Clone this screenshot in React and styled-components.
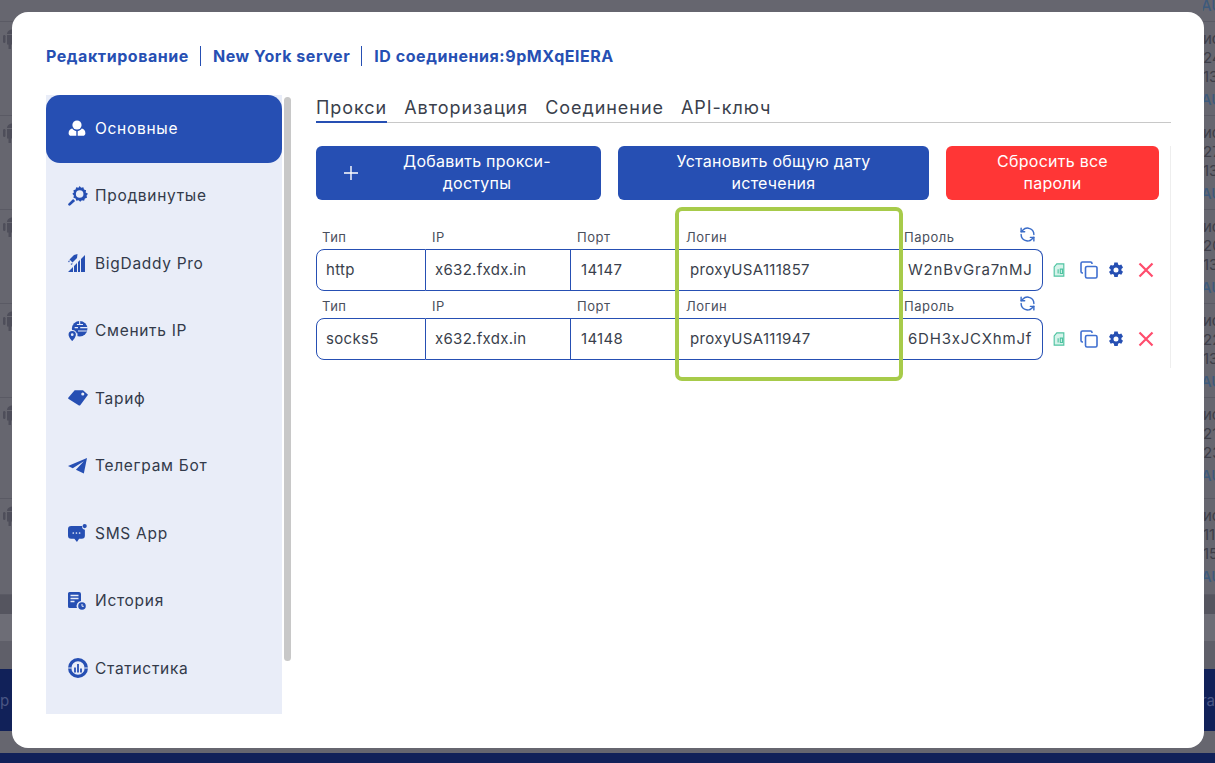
import React from "react";
import styled, { createGlobalStyle } from "styled-components";

const Global = createGlobalStyle`
  html, body {
    margin: 0;
    padding: 0;
    height: 100%;
    overflow: hidden;
    font-family: Inter, "Open Sans", "Liberation Sans", sans-serif;
  }
  * { box-sizing: border-box; }
`;

const BLUE = "#264fb3";

const Backdrop = styled("div")`
  height: 763px;
  width: 1215px;
  overflow: hidden;
  background: #66666f;
  display: flex;
  flex-direction: column;
`;

const BackRow = styled("div")`
  height: ${(p) => p.$h}px;
  flex: none;
  display: flex;
  justify-content: space-between;
  align-items: ${(p) => (p.$top ? "flex-end" : "stretch")};
  padding-left: 3px;
  padding-bottom: ${(p) => (p.$top ? 6 : 0)}px;
  border-bottom: 1px solid #5a5a64;
  overflow: hidden;
`;

const BackIcon = styled("svg")`
  width: 18px;
  height: 20px;
  margin-top: 7px;
  color: #4e4e5a;
  flex: none;
`;

const BackCell = styled("div")`
  width: 12px;
  flex: none;
  white-space: nowrap;
  font-size: 15px;
  line-height: 19px;
  color: #3e3e48;
  padding-top: ${(p) => (p.$top ? 0 : 7)}px;
  overflow: hidden;
`;

const BackLink = styled("div")`
  color: #3d5a7c;
  font-weight: 500;
  margin-top: ${(p) => (p.$top ? 0 : 4)}px;
  margin-left: -2px;
`;

const Band = styled("div")`
  height: ${(p) => p.$h}px;
  flex: none;
  background: ${(p) => p.$bg};
  display: flex;
  justify-content: space-between;
  align-items: center;
  color: #4a5684;
  font-size: 15px;
`;

const Modal = styled("div")`
  position: fixed;
  top: 12px;
  left: 12px;
  width: 1192px;
  height: 736px;
  background: #fff;
  border-radius: 16px;
  padding: 34px 33px 34px 34px;
  display: flex;
  flex-direction: column;
  overflow: hidden;
`;

const Heading = styled("div")`
  display: flex;
  align-items: center;
  height: 20px;
  font-size: 16px;
  font-weight: 700;
  letter-spacing: 0.55px;
  color: ${BLUE};
  white-space: nowrap;
`;

const HeadPart = styled("span")`
  padding: 0 11px 0 12px;
  line-height: 20px;
  border-left: 1px solid ${BLUE};

  &:first-child {
    padding-left: 0;
    border-left: none;
  }
`;

const Body = styled("div")`
  flex: 1;
  min-height: 0;
  display: flex;
  margin-top: 29px;
`;

const Sidebar = styled("nav")`
  width: 236px;
  height: 619px;
  flex: none;
  background: #e9edf8;
  overflow: hidden;
`;

const NavItem = styled("div")`
  height: 67.5px;
  display: flex;
  align-items: center;
  padding: 0 0 1px 22px;
  font-size: 15.5px;
  letter-spacing: 0.7px;
  border-radius: 14px;
  color: ${(p) => (p.$active ? "#fff" : "#333a4a")};
  background: ${(p) => (p.$active ? BLUE : "transparent")};
`;

const NavIcon = styled("svg")`
  width: ${(p) => p.$size}px;
  height: ${(p) => p.$size}px;
  margin-right: ${(p) => 27 - p.$size}px;
  flex: none;
  color: ${(p) => (p.$active ? "#fff" : BLUE)};
`;

const Scrollbar = styled("div")`
  width: 7px;
  height: 564px;
  margin: 2px 0 0 2px;
  flex: none;
  background: #c8c8c8;
  border-radius: 4px;
`;

const Content = styled("div")`
  width: 855px;
  margin-left: 25px;
  flex: none;
`;

const Tabs = styled("div")`
  display: flex;
  gap: 17px;
  height: 28px;
  border-bottom: 1px solid #c8c8c8;
`;

const Tab = styled("div")`
  font-size: 18px;
  letter-spacing: 0.95px;
  line-height: 25px;
  height: 28px;
  color: #3a3f4c;
  white-space: nowrap;
  border-bottom: ${(p) => (p.$active ? `2px solid ${BLUE}` : "none")};
`;

const Panel = styled("div")`
  height: 222px;
  margin-top: 23px;
  border-right: 1px solid #eeeeee;
`;

const Buttons = styled("div")`
  display: flex;
  gap: 17px;
`;

const Button = styled("div")`
  width: ${(p) => p.$w}px;
  height: 54px;
  flex: none;
  display: flex;
  align-items: center;
  justify-content: center;
  padding: 0 ${(p) => p.$pad}px 2px;
  border-radius: 6px;
  background: ${(p) => (p.$danger ? "#ff3636" : BLUE)};
  color: #fff;
  font-size: 16px;
  letter-spacing: 0.25px;
  line-height: 22px;
  text-align: center;
`;

const AddButton = styled(Button)`
  padding: 0 41px 2px 27px;
`;

const PlusIcon = styled("svg")`
  width: 16px;
  height: 16px;
  margin: 2px 35px 0 0;
  flex: none;
`;

const ButtonText = styled("span")`
  flex: 1;
`;

const Rows = styled("div")`
  position: relative;
  margin-top: 22px;
`;

const Row = styled("div")`
  display: grid;
  grid-template-columns: 110px 145px 109px 218px 145px 1fr;
  grid-template-rows: 27px 42px;
`;

const Label = styled("div")`
  font-size: 13px;
  letter-spacing: 0.5px;
  color: #4a4f5c;
  padding: 7px 0 0 6px;
  line-height: 16px;
  display: flex;
  justify-content: space-between;

  svg {
    width: 17px;
    height: 17px;
    margin: -3px 7px 0 0;
    color: #3a6cc8;
  }
`;

const Value = styled("div")`
  border: 1.5px solid ${BLUE};
  border-left: ${(p) => (p.$first ? `1.5px solid ${BLUE}` : "none")};
  border-right: ${(p) => (p.$last || p.$rightLine ? `1.5px solid ${BLUE}` : "none")};
  border-radius: ${(p) => (p.$first ? "8px 0 0 8px" : p.$last ? "0 8px 8px 0" : "0")};
  padding: 0 0 2px ${(p) => (p.$rightLine ? 9 : 10)}px;
  display: flex;
  align-items: center;
  font-size: 15px;
  letter-spacing: ${(p) => (p.$last ? 0.8 : 0.3)}px;
  color: #3a3f4c;
  white-space: nowrap;
  overflow: hidden;
`;

const Actions = styled("div")`
  grid-column: 6;
  grid-row: 2;
  display: flex;
  align-items: center;
  padding-left: 9px;
`;

const ActionIcon = styled("svg")`
  width: ${(p) => p.$size}px;
  height: ${(p) => p.$size}px;
  margin-right: ${(p) => p.$gap}px;
  color: ${(p) => p.$color};
  flex: none;
`;

const Highlight = styled("div")`
  position: absolute;
  left: 359px;
  top: -15px;
  width: 228px;
  height: 174px;
  border: 4px solid #a7cb4a;
  border-radius: 7px;
  pointer-events: none;
`;

const navItems = [
  {
    name: "Основные",
    size: 18,
    icon: (
      <>
        <circle cx="9" cy="6" r="4.6" />
        <path d="M.6 14.2c0-2.6 1.7-4.4 3.6-4.6 1 1.6 2.6 2.4 4.1 2.6v4.6H3c-1.4 0-2.4-1.2-2.4-2.6z" />
        <path d="M17.4 14.2c0-2.600-1.700-4.400-3.600-4.600-1 1.600-2.600 2.400-4.100 2.600v4.600H15c1.400 0 2.400-1.200 2.400-2.600z" />
      </>
    ),
  },
  {
    name: "Продвинутые",
    size: 20,
    icon: (
      <>
        <path
          fillRule="evenodd"
          d="M10.5 0l1.3 1.6 2-.4.6 1.9 1.9.7-.4 2L18 7l-1.3 1.6.4 2-1.900.7-.7 1.900-2-.4-1.500 1.300-1.500-1.300-2 .4-.7-1.900-1.900-.7.4-2L3.900 7l1.400-1.200-.4-2 1.900-.7.6-1.900 2 .4zM10.500 3.800a3.400 3.400 0 100 6.800 3.400 3.400 0 000-6.800z"
        />
        <path d="M4.600 11.600l1.800 1.800-4.200 4c-.5.500-1.200.500-1.700 0s-.5-1.200 0-1.700z" />
      </>
    ),
  },
  {
    name: "BigDaddy Pro",
    size: 18,
    icon: (
      <>
        <path d="M0 18l5-5v5zM6 12l3-3v9H6zM10 8l2-2v12h-2zM13 5l4-4v17h-4z" />
        <path d="M9.500 0L6 1 1.500 5.500l3 3L9 4z" />
        <path d="M2 6.500L0 7l1 1.500zM4.500 9l-.5 2-1.500-1z" />
      </>
    ),
  },
  {
    name: "Сменить IP",
    size: 20,
    icon: (
      <>
        <circle cx="10.500" cy="7" r="7" />
        <circle cx="3.800" cy="12.500" r="4.400" fill="#e9edf8" />
        <path d="M3.800 9a3.300 3.300 0 00-3.300 3.300c0 2.300 3.300 5.700 3.300 5.700s3.300-3.400 3.300-5.700A3.300 3.300 0 003.800 9z" />
        <circle cx="3.800" cy="12.300" r="1.200" fill="#e9edf8" />
        <path d="M8 3.200h5.500M6 6h3M11 6h6.800M9 9h8" stroke="#e9edf8" strokeWidth="1" />
        <path d="M10.500 0v3M8 11v3" stroke="#e9edf8" strokeWidth="1" />
      </>
    ),
  },
  {
    name: "Тариф",
    size: 20,
    icon: (
      <path
        fillRule="evenodd"
        d="M6 2h7.500L18 6l-7 9.500c-.4.400-1 .5-1.500.1L.6 10c-.5-.4-.6-1-.2-1.500zM13.300 4a1.400 1.400 0 100 2.800 1.400 1.400 0 000-2.800z"
      />
    ),
  },
  {
    name: "Телеграм Бот",
    size: 19,
    icon: <path d="M18 2L0 9.500l4.500 2L15 5l-7.500 8 7.500 3.500z" />,
  },
  {
    name: "SMS App",
    size: 19,
    icon: (
      <>
        <path d="M3 2h10.500a3 3 0 002.500 3.500V11a3 3 0 01-3 3h-2.500L8.500 17 6 14H3a3 3 0 01-3-3V5a3 3 0 013-3z" />
        <circle cx="15.800" cy="2" r="2" />
        <circle cx="5" cy="8.500" r=".8" fill="#e9edf8" />
        <circle cx="8" cy="8.500" r=".8" fill="#e9edf8" />
        <circle cx="11" cy="8.500" r=".8" fill="#e9edf8" />
      </>
    ),
  },
  {
    name: "История",
    size: 18,
    icon: (
      <>
        <path d="M1.500 0H11a2 2 0 012 2v7a5 5 0 00-4 7H1.500A1.500 1.500 0 010 14.500v-13A1.500 1.500 0 011.500 0z" />
        <path d="M2.500 3.500h8M2.500 6.500h8M2.500 9.500h4" stroke="#e9edf8" strokeWidth="1.300" />
        <circle cx="14" cy="14" r="3.800" />
        <path d="M14 12v2.300h1.800" stroke="#e9edf8" strokeWidth="1" fill="none" />
      </>
    ),
  },
  {
    name: "Статистика",
    size: 20,
    icon: (
      <>
        <path
          fillRule="evenodd"
          d="M9 0a9 9 0 110 18A9 9 0 019 0zm0 3a6 6 0 100 12A6 6 0 009 3z"
        />
        <path d="M5.500 8.500h1.600V13H5.500zM8.200 5.500h1.600V13H8.200zM10.900 9.500h1.600V13h-1.600z" />
        <path d="M0 9h3M15 9h3" stroke="#e9edf8" strokeWidth="1" />
      </>
    ),
  },
];

const proxies = [
  { type: "http", ip: "x632.fxdx.in", port: "14147", login: "proxyUSA111857", pass: "W2nBvGra7nMJ" },
  { type: "socks5", ip: "x632.fxdx.in", port: "14148", login: "proxyUSA111947", pass: "6DH3xJCXhmJf" },
];

const backRows = [
  { h: 94, a: "24.", b: "13:" },
  { h: 94, a: "27.", b: "13:" },
  { h: 94, a: "20.", b: "13:" },
  { h: 94, a: "22.", b: "13:" },
  { h: 101, a: "21.", b: "23:" },
  { h: 96, a: "11.", b: "15:" },
];

function AndroidGlyph() {
  return (
    <BackIcon viewBox="0 0 18 20" fill="currentColor">
      <rect x="0" y="6" width="2.500" height="8" rx="1.200" />
      <path d="M4 6h11v9.500h-2V20h-2.500v-4.500H8V20H5.500v-4.500H4z" />
      <path d="M4 5c0-2.500 2.500-4.500 5.500-4.500S15 2.500 15 5z" />
    </BackIcon>
  );
}

function RefreshIcon() {
  return (
    <svg viewBox="0 0 24 24" fill="none" stroke="currentColor" strokeWidth="2" strokeLinecap="round" strokeLinejoin="round">
      <path d="M21 12a9 9 0 00-15.500-6.200L3 8" />
      <path d="M3 3v5h5" />
      <path d="M3 12a9 9 0 0015.500 6.200L21 16" />
      <path d="M16 16h5v5" />
    </svg>
  );
}

function ProxyRow({ proxy }) {
  return (
    <Row>
      <Label>Тип</Label>
      <Label>IP</Label>
      <Label>Порт</Label>
      <Label>Логин</Label>
      <Label>
        Пароль
        <RefreshIcon />
      </Label>
      <span />
      <Value $first $rightLine>{proxy.type}</Value>
      <Value $rightLine>{proxy.ip}</Value>
      <Value>{proxy.port}</Value>
      <Value>{proxy.login}</Value>
      <Value $last>{proxy.pass}</Value>
      <Actions>
        <ActionIcon $size={14} $gap={14} $color="#4fc3a1" viewBox="0 0 14 16" fill="none" stroke="currentColor" strokeWidth="1.300">
          <path d="M4.500 1H12.500V15H1.500V4.500z" fill="#d6f3ea" />
          <path d="M6 7v5M8.500 7h2.500v5H8.500z" />
        </ActionIcon>
        <ActionIcon $size={18} $gap={10} $color="#3f6fd0" viewBox="0 0 18 18" fill="none" stroke="currentColor" strokeWidth="1.600">
          <rect x="5.500" y="5.500" width="11.500" height="11.500" rx="1.500" />
          <path d="M12 3V2.500A1.500 1.500 0 0010.500 1h-8A1.500 1.500 0 001 2.500v8A1.500 1.500 0 002.500 12H3" />
        </ActionIcon>
        <ActionIcon $size={16} $gap={14} $color={BLUE} viewBox="0 0 16 16" fill="currentColor">
          <path
            fillRule="evenodd"
            d="M6.300.5h3.400l.4 2.100 1.200.7 2-.7 1.700 3-1.600 1.400v1.400l1.600 1.400-1.700 3-2-.7-1.200.7-.4 2.100H6.300l-.4-2.100-1.200-.7-2 .7-1.700-3L2.600 8.700V7.300L1 5.900l1.700-3 2 .7 1.200-.7zM8 5.500a2.500 2.500 0 100 5 2.500 2.500 0 000-5z"
          />
        </ActionIcon>
        <ActionIcon $size={16} $gap={0} $color="#ff4d6d" viewBox="0 0 16 16" fill="none" stroke="currentColor" strokeWidth="2.200">
          <path d="M1.500 1.500l13 13M14.500 1.500l-13 13" />
        </ActionIcon>
      </Actions>
    </Row>
  );
}

export default function App() {
  return (
    <>
      <Global />
      <Backdrop>
        <BackRow $h={22} $top>
          <span />
          <BackCell $top>
            <BackLink $top>AU</BackLink>
          </BackCell>
        </BackRow>
        {backRows.map((row, i) => (
          <BackRow key={i} $h={row.h}>
            <AndroidGlyph />
            <BackCell>
              ис
              <br />
              {row.a}
              <br />
              {row.b}
              <BackLink>AU</BackLink>
            </BackCell>
          </BackRow>
        ))}
        <Band $h={19} $bg="#55555f" />
        <Band $h={27} $bg="#6d6d76" />
        <Band $h={28} $bg="#5f5f69" />
        <Band $h={62} $bg="#112159">
          <span>p</span>
          <span>ra</span>
        </Band>
        <Band $h={22} $bg="#66666f" />
        <Band $h={10} $bg="#112159" />
      </Backdrop>

      <Modal>
        <Heading>
          <HeadPart>Редактирование</HeadPart>
          <HeadPart>New York server</HeadPart>
          <HeadPart>ID соединения:9pMXqElERA</HeadPart>
        </Heading>
        <Body>
          <Sidebar>
            {navItems.map((item, i) => (
              <NavItem key={item.name} $active={i === 0}>
                <NavIcon $size={item.size} $active={i === 0} viewBox="0 0 18 18" fill="currentColor">
                  {item.icon}
                </NavIcon>
                {item.name}
              </NavItem>
            ))}
          </Sidebar>
          <Scrollbar />
          <Content>
            <Tabs>
              <Tab $active>Прокси</Tab>
              <Tab>Авторизация</Tab>
              <Tab>Соединение</Tab>
              <Tab>API-ключ</Tab>
            </Tabs>
            <Panel>
              <Buttons>
                <AddButton $w={285}>
                  <PlusIcon viewBox="0 0 16 16" stroke="#fff" strokeWidth="1.400">
                    <path d="M8 1v14M1 8h14" />
                  </PlusIcon>
                  <ButtonText>Добавить прокси-доступы</ButtonText>
                </AddButton>
                <Button $w={311} $pad={50}>Установить общую дату истечения</Button>
                <Button $w={213} $pad={40} $danger>Сбросить все пароли</Button>
              </Buttons>
              <Rows>
                {proxies.map((proxy) => (
                  <ProxyRow key={proxy.port} proxy={proxy} />
                ))}
                <Highlight />
              </Rows>
            </Panel>
          </Content>
        </Body>
      </Modal>
    </>
  );
}
